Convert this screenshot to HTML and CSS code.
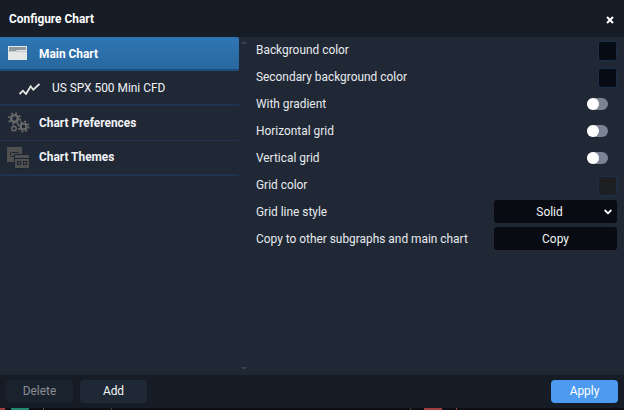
FILE: index.html
```html
<!DOCTYPE html>
<html lang="en">

<head>
    <meta charset="UTF-8">
    <title>Configure Chart</title>
    <link rel="stylesheet" href="styles.css">
</head>

<body>

    <div class="dialog">

        <div class="header">
            <span class="title">Configure Chart</span>
            <svg class="close" width="8" height="8" viewBox="0 0 8 8">
                <path d="M1 1l6 6M7 1L1 7" fill="none" stroke="#fff" stroke-width="2"/>
            </svg>
        </div>

        <div class="content">
            <div class="sidebar">
                <div class="nav-item active">
                    <svg class="nav-icon" width="19" height="14" viewBox="0 0 19 14">
                        <path d="M0 0h19v14H0z" fill="#e6e8e8"/>
                        <path d="M1 1h17v3H9L8 5H1z" fill="#8f9aa3"/>
                        <path d="M0 5.500h19" stroke="#c4c9cb"/>
                    </svg>
                    <span>Main Chart</span>
                </div>
                <div class="nav-item sub">
                    <svg class="sub-icon" width="21" height="13" viewBox="0 0 21 13">
                        <path d="M.5 12l3.500-3.300L7 12l4.700-7.700 2.600 3.400L20.500 2" fill="none" stroke="#e8e8e8" stroke-width="1.800"/>
                    </svg>
                    <span>US SPX 500 Mini CFD</span>
                </div>
                <div class="nav-item">
                    <svg class="nav-icon" width="22" height="21" viewBox="0 0 22 21">
                        <circle cx="6.500" cy="6" r="3.400" fill="none" stroke="#6b6b6b" stroke-width="2.400"/>
                        <circle cx="6.500" cy="6" r="5.700" fill="none" stroke="#6b6b6b" stroke-width="1.600" stroke-dasharray="2 2.500"/>
                        <circle cx="15.500" cy="14" r="3" fill="none" stroke="#6b6b6b" stroke-width="2.200"/>
                        <circle cx="15.500" cy="14" r="5.200" fill="none" stroke="#6b6b6b" stroke-width="1.500" stroke-dasharray="2 2.100"/>
                        <circle cx="6" cy="16" r="2.200" fill="none" stroke="#6b6b6b" stroke-width="1.400"/>
                    </svg>
                    <span>Chart Preferences</span>
                </div>
                <div class="nav-item last">
                    <svg class="nav-icon themes-icon" width="23" height="22" viewBox="0 0 23 22">
                        <path d="M0 0h15v15H0z" fill="#505050"/>
                        <rect x="3.500" y="5.500" width="8" height="4" rx="1" fill="none" stroke="#1e2634"/>
                        <path d="M7.500 7.500h15v14h-15z" fill="#505050" stroke="#1e2634"/>
                        <path d="M8 11.500h14" stroke="#1e2634"/>
                        <path d="M10.500 14.500h3v3h-3zM16.500 14.500h3v3h-3z" fill="none" stroke="#1e2634" stroke-width="1.200"/>
                    </svg>
                    <span>Chart Themes</span>
                </div>
            </div>

            <div class="scroller">
                <span class="arrow-up"></span>
                <span class="arrow-down"></span>
            </div>

            <div class="settings">
                <div class="row">
                    <span>Background color</span>
                    <span class="swatch swatch-dark"></span>
                </div>
                <div class="row">
                    <span>Secondary background color</span>
                    <span class="swatch swatch-dark"></span>
                </div>
                <div class="row">
                    <span>With gradient</span>
                    <span class="toggle"></span>
                </div>
                <div class="row">
                    <span>Horizontal grid</span>
                    <span class="toggle"></span>
                </div>
                <div class="row">
                    <span>Vertical grid</span>
                    <span class="toggle"></span>
                </div>
                <div class="row">
                    <span>Grid color</span>
                    <span class="swatch swatch-grey"></span>
                </div>
                <div class="row">
                    <span>Grid line style</span>
                    <div class="field select">
                        <span>Solid</span>
                        <svg class="chevron" width="8" height="6" viewBox="0 0 8 6">
                            <path d="M.7 1l3.300 3.300L7.300 1" fill="none" stroke="#fff" stroke-width="1.800"/>
                        </svg>
                    </div>
                </div>
                <div class="row">
                    <span>Copy to other subgraphs and main chart</span>
                    <div class="field">Copy</div>
                </div>
            </div>
        </div>

        <div class="footer">
            <button class="btn btn-disabled">Delete</button>
            <button class="btn">Add</button>
            <button class="btn btn-apply">Apply</button>
        </div>

    </div>

    <div class="strip"></div>

</body>

</html>
```

FILE: styles.css
```css
body {
    margin: 0;
    padding: 0;
    background-color: #0b0e13;
    font-family: 'Roboto', sans-serif;
    color: #e8eaee;
    overflow: hidden;
}

.dialog {
    width: 624px;
    height: 408px;
    display: flex;
    flex-direction: column;
    font-size: 11.9px;
}

/* bits of the chart behind the dialog */
.strip {
    height: 2px;
    background: linear-gradient(90deg,
        #a33c3c 0 5px, #0b0e13 5px 11px, #1f8a70 11px 29px, #0b0e13 29px 43px,
        #555 43px 44px, #0b0e13 44px 111px, #444 111px 112px, #0b0e13 112px 410px,
        #444 410px 411px, #0b0e13 411px 424px, #a33c3c 424px 442px, #0b0e13 442px 456px,
        #a33c3c 456px 457px, #0b0e13 457px);
}

.header {
    height: 37px;
    flex-shrink: 0;
    display: flex;
    align-items: center;
    justify-content: space-between;
    padding: 0 10px 0 9px;
    box-sizing: border-box;
    background-color: #171d27;
}

.title {
    font-weight: 700;
    color: #fff;
}

.close {
    margin-top: 2px;
}

.content {
    flex: 1;
    display: flex;
    background-color: #202836;
}

.sidebar {
    width: 239px;
    flex-shrink: 0;
}

.scroller {
    width: 10px;
    flex-shrink: 0;
    display: flex;
    flex-direction: column;
    justify-content: space-between;
    align-items: center;
    padding: 4px 0 5px;
    box-sizing: border-box;
}

.arrow-up,
.arrow-down {
    width: 0;
    height: 0;
    border-left: 3px solid transparent;
    border-right: 3px solid transparent;
}

.arrow-up {
    border-bottom: 3px solid #3a4350;
}

.arrow-down {
    border-top: 3px solid #3a4350;
}

.nav-item {
    height: 35px;
    display: flex;
    align-items: center;
    box-sizing: border-box;
    border-bottom: 1px solid #1f3350;
    font-weight: 700;
    color: #f2f4f6;
    position: relative;
    padding: 0 0 1px 39px;
}

.nav-icon {
    position: absolute;
    left: 8px;
    top: 50%;
    transform: translateY(-50%);
}

.themes-icon {
    left: 7px;
}

.sub-icon {
    position: absolute;
    left: 19px;
    top: 11px;
}

.active {
    height: 34px;
    background: linear-gradient(#2f76b5, #28689f);
    border-bottom: 2px solid #1d4d7b;
    border-radius: 0 2px 2px 0;
    color: #fff;
    padding: 1px 0 0 39px;
}

.sub {
    padding: 0 0 0 52px;
    font-weight: 400;
    border-bottom-width: 2px;
}

.last {
    border-bottom-width: 2px;
    border-radius: 0 0 2px 2px;
}

.settings {
    flex: 1;
    padding: 0 7px 0 7px;
    margin-top: -1px;
}

.row {
    height: 27px;
    display: flex;
    align-items: center;
    justify-content: space-between;
}

.swatch {
    width: 19px;
    height: 20px;
    box-sizing: border-box;
    border: 1px solid #1b2f4b;
    border-radius: 3px;
    margin-top: 2px;
}

.swatch-dark {
    background-color: #070b14;
}

.swatch-grey {
    background-color: #1e1f21;
}

.toggle {
    width: 21px;
    height: 12px;
    margin-right: 9px;
    border-radius: 6px;
    background-color: #7b8394;
    position: relative;
}

.toggle::before {
    content: "";
    position: absolute;
    left: 0;
    top: 0;
    width: 12px;
    height: 12px;
    border-radius: 50%;
    background-color: #fff;
}

.field {
    width: 123px;
    height: 23px;
    display: flex;
    align-items: center;
    justify-content: center;
    background-color: #080b11;
    border-radius: 3px;
    color: #f2f4f6;
    position: relative;
}

.select {
    padding-right: 12px;
    box-sizing: border-box;
}

.chevron {
    position: absolute;
    right: 5px;
    top: 9px;
}

.footer {
    height: 33px;
    flex-shrink: 0;
    display: flex;
    align-items: center;
    gap: 7px;
    padding: 0 6px;
    box-sizing: border-box;
    background-color: #151c25;
}

.btn {
    width: 67px;
    height: 23px;
    border: none;
    border-radius: 4px;
    background-color: #1f2835;
    color: #f2f4f6;
    font-family: 'Roboto', sans-serif;
    font-size: 11.9px;
    padding: 0 0 2px;
}

.btn-disabled {
    color: #8a8e95;
    background-color: #1a222e;
}

.btn-apply {
    margin-left: auto;
    background-color: #4c9bf0;
    color: #fff;
    padding: 0 0 1px;
}
```
